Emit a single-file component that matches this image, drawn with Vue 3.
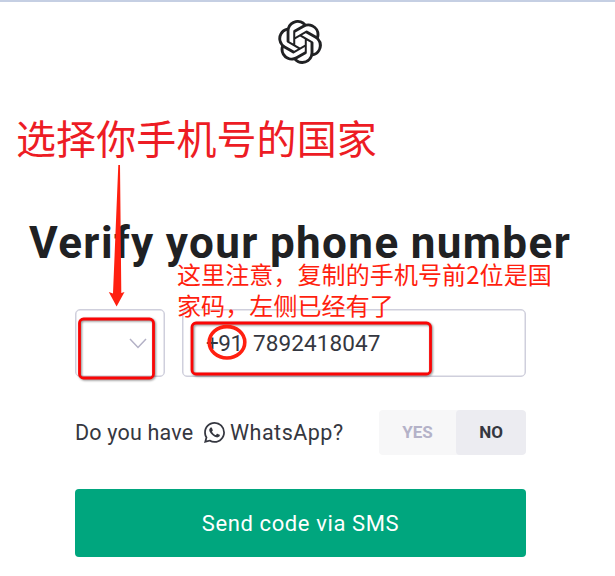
<script setup>
import { ref } from 'vue'

const phone = ref('7892418047')
const dialCode = '+91'
const hasWhatsApp = ref(false)
</script>

<template>
  <div class="page">
    <header class="brand">
      <svg class="logo" viewBox="0 0 24 24" aria-hidden="true">
        <path d="M22.2819 9.8211a5.9847 5.9847 0 0 0-.5157-4.9108 6.0462 6.0462 0 0 0-6.5098-2.9A6.0651 6.0651 0 0 0 4.9807 4.1818a5.9847 5.9847 0 0 0-3.9977 2.9 6.0462 6.0462 0 0 0 .7427 7.0966 5.98 5.98 0 0 0 .511 4.9107 6.051 6.051 0 0 0 6.5146 2.9001A5.9847 5.9847 0 0 0 13.2599 24a6.0557 6.0557 0 0 0 5.7718-4.2058 5.9894 5.9894 0 0 0 3.9977-2.9001 6.0557 6.0557 0 0 0-.7475-7.0729zm-9.022 12.6081a4.4755 4.4755 0 0 1-2.8764-1.0408l.1419-.0804 4.7783-2.7582a.7948.7948 0 0 0 .3927-.6813v-6.7369l2.02 1.1686a.071.071 0 0 1 .038.052v5.5826a4.504 4.504 0 0 1-4.4945 4.4944zm-9.6607-4.1254a4.4708 4.4708 0 0 1-.5346-3.0137l.142.0852 4.783 2.7582a.7712.7712 0 0 0 .7806 0l5.8428-3.3685v2.3324a.0804.0804 0 0 1-.0332.0615L9.74 19.9502a4.4992 4.4992 0 0 1-6.1408-1.6464zM2.3408 7.8956a4.485 4.485 0 0 1 2.3655-1.9728V11.6a.7664.7664 0 0 0 .3879.6765l5.8144 3.3543-2.0201 1.1685a.0757.0757 0 0 1-.071 0l-4.8303-2.7865A4.504 4.504 0 0 1 2.3408 7.872zm16.5963 3.8558L13.1038 8.364 15.1192 7.2a.0757.0757 0 0 1 .071 0l4.8303 2.7913a4.4944 4.4944 0 0 1-.6765 8.1042v-5.6772a.79.79 0 0 0-.407-.667zm2.0107-3.0231l-.142-.0852-4.7735-2.7818a.7759.7759 0 0 0-.7854 0L9.409 9.2297V6.8974a.0662.0662 0 0 1 .0284-.0615l4.8303-2.7866a4.4992 4.4992 0 0 1 6.6802 4.66zM8.3065 12.863l-2.02-1.1638a.0804.0804 0 0 1-.038-.0567V6.0742a4.4992 4.4992 0 0 1 7.3757-3.4537l-.142.0805L8.704 5.459a.7948.7948 0 0 0-.3927.6813zm1.0976-2.3654l2.602-1.4998 2.6069 1.4998v2.9994l-2.5974 1.4997-2.6067-1.4997Z" />
      </svg>
    </header>

    <h1 class="title">Verify your phone number</h1>

    <main class="form">
      <div class="fields">
        <div class="country">
          <svg class="chevron" viewBox="0 0 18 11" aria-hidden="true"><path d="M1 1l8 8.500L17 1" /></svg>
        </div>
        <div class="phone">
          <span class="code">{{ dialCode }}</span>
          <span class="digits">{{ phone }}</span>
        </div>
      </div>

      <div class="question">
        <span class="have">Do you have</span>
        <svg class="whatsapp" viewBox="0 0 24 24" aria-hidden="true">
          <path d="M17.472 14.382c-.297-.149-1.758-.867-2.03-.967-.273-.099-.471-.148-.67.15-.197.297-.767.966-.94 1.164-.173.199-.347.223-.644.075-.297-.15-1.255-.463-2.39-1.475-.883-.788-1.48-1.761-1.653-2.059-.173-.297-.018-.458.13-.606.134-.133.298-.347.446-.52.149-.174.198-.298.298-.497.099-.198.05-.371-.025-.52-.075-.149-.669-1.612-.916-2.207-.242-.579-.487-.5-.669-.51-.173-.008-.371-.01-.57-.01-.198 0-.52.074-.792.372-.272.297-1.04 1.016-1.04 2.479 0 1.462 1.065 2.875 1.213 3.074.149.198 2.096 3.2 5.077 4.487.709.306 1.262.489 1.694.625.712.227 1.36.195 1.871.118.571-.085 1.758-.719 2.006-1.413.248-.694.248-1.289.173-1.413-.074-.124-.272-.198-.57-.347m-5.421 7.403h-.004a9.87 9.87 0 01-5.031-1.378l-.361-.214-3.741.982.998-3.648-.235-.374a9.86 9.86 0 01-1.51-5.26c.001-5.45 4.436-9.884 9.888-9.884 2.64 0 5.122 1.03 6.988 2.898a9.825 9.825 0 012.893 6.994c-.003 5.45-4.437 9.884-9.885 9.884m8.413-18.297A11.815 11.815 0 0012.05 0C5.495 0 .16 5.335.157 11.892c0 2.096.547 4.142 1.588 5.945L.057 24l6.305-1.654a11.882 11.882 0 005.683 1.448h.005c6.554 0 11.89-5.335 11.893-11.893a11.821 11.821 0 00-3.48-8.413z" />
        </svg>
        <span class="app">WhatsApp?</span>
        <div class="toggle">
          <button class="option yes" :class="{ active: hasWhatsApp }" @click="hasWhatsApp = true">YES</button>
          <button class="option no" :class="{ active: !hasWhatsApp }" @click="hasWhatsApp = false">NO</button>
        </div>
      </div>

      <button class="submit"><span>Send code via SMS</span></button>
    </main>

    <!-- Hand-drawn guidance layered over the form -->
    <div class="note note-country">选择你手机号的国家</div>
    <div class="note note-phone">这里注意，复制的手机号前2位是国<br />家码，左侧已经有了</div>
    <svg class="marks" viewBox="0 0 615 576" aria-hidden="true">
      <path class="arrow" d="M118.300 165H120L121.300 293L124.500 292L116.600 306.500L108.800 292L113 293.500Z" />
      <g class="frames">
        <rect x="79.500" y="319" width="74" height="59" rx="4" />
        <rect x="192" y="323" width="238.500" height="51" rx="4" />
      </g>
      <ellipse class="ring" cx="227" cy="342.300" rx="17.800" ry="15.700" />
    </svg>
  </div>
</template>

<style>
body {
  margin: 0;
  background: #fff;
}
</style>

<style scoped>
.page {
  position: relative;
  box-sizing: border-box;
  width: 615px;
  height: 576px;
  overflow: hidden;
  border-top: 2px solid #c5cfe3;
  background: #fff;
  color: #353740;
  font-family: Roboto, "Noto Sans CJK SC", sans-serif;
}
.brand {
  display: flex;
  justify-content: center;
  padding: 18px 15px 0 0;
}
.logo {
  width: 44px;
  height: 44px;
  fill: #202123;
}
.title {
  margin: 146px 0 0 29px;
  font-size: 44px;
  line-height: 66px;
  font-weight: 700;
  letter-spacing: 1.4px;
  word-spacing: -1.2px;
  color: #202123;
  white-space: nowrap;
}
.form {
  display: flex;
  flex-direction: column;
  width: 451px;
  margin: 33px 0 0 75px;
}
.fields {
  display: flex;
  gap: 17px;
}
.country,
.phone {
  box-sizing: border-box;
  display: flex;
  align-items: center;
  height: 68px;
  border: 1.5px solid #cfcfdc;
  border-radius: 5px;
  box-shadow: inset 0 0 0 0.5px #cfcfdc;
}
.country {
  width: 90px;
  justify-content: flex-end;
  padding-right: 17px;
}
.chevron {
  width: 18px;
  height: 11px;
  fill: none;
  stroke: #b3b1c6;
  stroke-width: 1.5;
}
.phone {
  flex: 1;
  gap: 11px;
  padding-left: 23px;
  font-size: 22.5px;
}
.code {
  width: 36px;
  letter-spacing: -0.5px;
}
.digits {
  letter-spacing: 0.1px;
}
.question {
  display: flex;
  align-items: center;
  height: 45px;
  margin-top: 33px;
  font-size: 21.5px;
  letter-spacing: 0.2px;
  white-space: nowrap;
}
.have {
  width: 129px;
}
.whatsapp {
  width: 21px;
  height: 21px;
  margin-right: 5px;
  fill: #353740;
}
.app {
  letter-spacing: 0.5px;
}
.toggle {
  display: flex;
  margin-left: auto;
  border-radius: 4px;
  overflow: hidden;
  background: #f7f7f8;
}
.option {
  height: 45px;
  border: 0;
  padding: 0 0 2px;
  background: none;
  color: #b4b2c8;
  font: 700 17px Roboto, sans-serif;
}
.yes {
  width: 77px;
}
.no {
  width: 70px;
}
.option.active {
  border-radius: 4px;
  background: #ececf1;
  color: #353740;
}
.submit {
  height: 68px;
  margin-top: 34px;
  border: 0;
  border-radius: 4px;
  background: #00a67e;
  color: #fff;
  font: 400 22px Roboto, sans-serif;
  letter-spacing: 0.6px;
}
.note {
  position: absolute;
  font-family: "Noto Sans CJK SC", sans-serif;
  white-space: nowrap;
}
.note-country {
  left: 16px;
  top: 105px;
  font-size: 40px;
  line-height: 60px;
  letter-spacing: 0.1px;
  color: #ed1c24;
}
.note-phone {
  left: 177px;
  top: 256px;
  font-size: 24px;
  line-height: 31px;
  letter-spacing: 0.1px;
  color: #ff1f0f;
}
.marks {
  position: absolute;
  left: 0;
  top: -2px;
  width: 615px;
  height: 576px;
  pointer-events: none;
}
.arrow {
  fill: #ff2010;
}
.frames {
  fill: none;
  stroke: #fa0505;
  stroke-width: 2.8;
  filter: drop-shadow(1px 1px 1px rgba(0, 0, 0, 0.45));
}
.ring {
  fill: none;
  stroke: #ff2010;
  stroke-width: 3.6;
}
</style>
